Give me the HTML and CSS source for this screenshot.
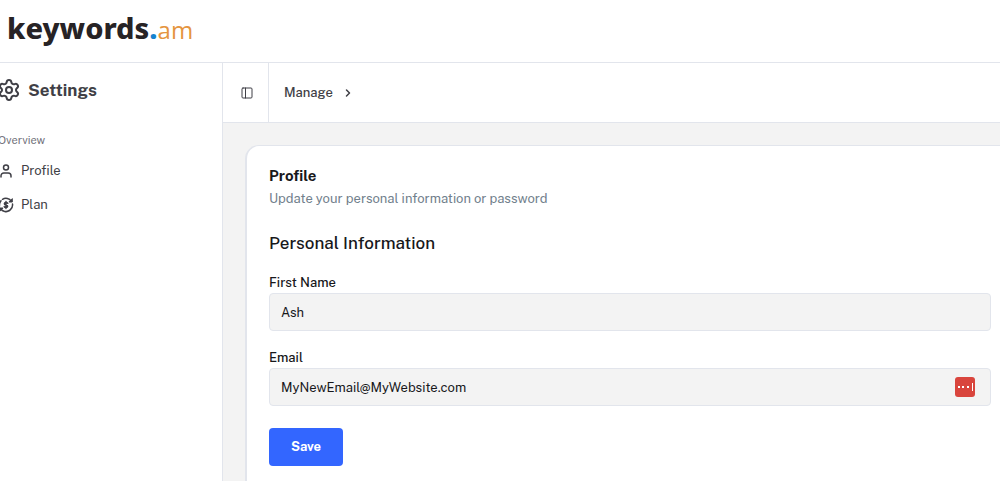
FILE: index.html
```html
<!DOCTYPE html>
<html lang="en">
<head>
  <meta charset="UTF-8" />
  <meta name="viewport" content="width=device-width, initial-scale=1.0">
  <title>Settings - keywords.am</title>
  <link rel="stylesheet" href="styles.css">
</head>
<body>
  <header class="site-header">
    <a class="logo" href="#">keywords<span class="logo-dot">.</span><span class="logo-tld">am</span></a>
  </header>

  <div class="layout">
    <aside class="sidebar">
      <h1 class="sidebar-title">
        <svg class="icon-gear" viewBox="0 0 24 24" aria-hidden="true">
          <path d="M9.671 4.136a2.34 2.34 0 0 1 4.659 0 2.34 2.34 0 0 0 3.319 1.915 2.34 2.34 0 0 1 2.33 4.033 2.34 2.34 0 0 0 0 3.831 2.34 2.34 0 0 1-2.33 4.033 2.34 2.34 0 0 0-3.319 1.915 2.34 2.34 0 0 1-4.659 0 2.34 2.34 0 0 0-3.32-1.915 2.34 2.34 0 0 1-2.33-4.033 2.34 2.34 0 0 0 0-3.831A2.34 2.34 0 0 1 6.35 6.051a2.34 2.34 0 0 0 3.319-1.915"/>
          <circle cx="12" cy="12" r="3"/>
        </svg>
        Settings
      </h1>
      <nav>
        <p class="nav-label">Overview</p>
        <a class="nav-link" href="#">
          <svg viewBox="0 0 16 16" aria-hidden="true">
            <circle cx="8" cy="4.5" r="2.5"/>
            <path d="M3 14v-1.2a2.8 2.8 0 0 1 2.8-2.8h4.4a2.8 2.8 0 0 1 2.8 2.8V14"/>
          </svg>
          Profile
        </a>
        <a class="nav-link" href="#">
          <svg viewBox="0 0 16 16" aria-hidden="true">
            <path d="M4.5 2.3A6.6 6.6 0 0 1 13.4 4.3M14.5 7a6.6 6.6 0 0 1-8.5 7.2M11.5 13.7A6.6 6.6 0 0 1 2.6 11.7M1.5 9A6.6 6.6 0 0 1 3 3.7"/>
            <path d="M14.3 2v3h-3zM1.7 14v-3h3z" fill="currentColor" stroke-width="1"/>
            <path d="M9.8 6.3C9.4 5.7 8.8 5.5 8 5.5c-2.2 0-2.2 2.3 0 2.5s2.2 2.5 0 2.5c-.8 0-1.5-.2-1.8-.8M8 4.6v6.8" stroke-width="1.5"/>
          </svg>
          Plan
        </a>
      </nav>
    </aside>

    <main class="content">
      <div class="topbar">
        <button class="toggle" type="button" aria-label="Toggle sidebar">
          <svg viewBox="0 0 12 12" aria-hidden="true">
            <rect x="1" y="1" width="10" height="10" rx="1"/>
            <path d="M4.5 1v10"/>
          </svg>
        </button>
        <nav class="breadcrumb">
          <a href="#">Manage</a>
          <svg viewBox="0 0 8 10" aria-hidden="true"><path d="M2.5 2l3 3-3 3"/></svg>
        </nav>
      </div>

      <section class="card">
        <h2 class="card-title">Profile</h2>
        <p class="card-text">Update your personal information or password</p>

        <form>
          <h3 class="form-title">Personal Information</h3>
          <div class="field">
            <label for="firstName">First Name</label>
            <input type="text" id="firstName" value="Ash">
          </div>
          <div class="field">
            <label for="email">Email</label>
            <div class="input-wrap">
              <input type="email" id="email" value="MyNewEmail@MyWebsite.com">
              <svg class="autofill" viewBox="0 0 20 20" aria-hidden="true">
                <rect width="20" height="20" rx="3" fill="#d9453d"/>
                <path d="M3 9h2v2H3zM7 9h2v2H7zM12 9h2v2h-2zM17 6h1v8h-1z" fill="#fff"/>
              </svg>
            </div>
          </div>
          <button class="save" type="button">Save</button>
        </form>
      </section>
    </main>
  </div>
</body>
</html>
```
FILE: styles.css
```css
* {
  box-sizing: border-box;
}
body {
  margin: 0;
  min-height: 100vh;
  display: flex;
  flex-direction: column;
  font-family: "Public Sans", Inter, "Liberation Sans", sans-serif;
  font-size: 13px;
  line-height: 20px;
  color: #18181b;
  background: #fff;
  overflow: hidden;
}
h1, h2, h3, p {
  margin: 0;
}
a {
  color: inherit;
  text-decoration: none;
}
svg {
  display: block;
  flex: none;
  fill: none;
  stroke: currentColor;
  stroke-linecap: round;
  stroke-linejoin: round;
}

/* header */
.site-header {
  padding: 8px 7px 12px;
  border-bottom: 1px solid #e2e5ec;
}
.logo {
  display: block;
  font-family: "Noto Sans", sans-serif;
  font-size: 29px;
  font-weight: 800;
  line-height: 40px;
  color: #272325;
}
.logo-dot {
  color: #1583cf;
}
.logo-tld {
  font-family: "Open Sans", sans-serif;
  font-size: 24px;
  font-weight: 400;
  color: #e5953f;
}

.layout {
  flex: 1;
  display: flex;
}

/* sidebar */
.sidebar {
  width: 223px;
  flex: none;
  border-right: 1px solid #e2e5ec;
  color: #3f3f46;
}
.sidebar-title {
  display: flex;
  align-items: center;
  gap: 7px;
  margin: 15px 0 30px -3px;
  font-size: 17px;
  font-weight: 700;
  line-height: 24px;
}
.icon-gear {
  width: 24px;
  height: 24px;
  stroke-width: 2;
}
.nav-label {
  margin: 0 0 6px -2px;
  font-size: 11px;
  line-height: 16px;
  color: #71717a;
}
.nav-link {
  display: flex;
  align-items: center;
  gap: 7px;
  height: 34px;
  margin-left: -2px;
}
.nav-link svg {
  width: 16px;
  height: 16px;
  stroke-width: 1.5;
}

/* content */
.content {
  flex: 1;
  min-width: 0;
  display: flex;
  flex-direction: column;
  background: #f3f3f3;
}
.topbar {
  display: flex;
  height: 60px;
  background: #fff;
  border-bottom: 1px solid #e2e5ec;
  color: #3f3f46;
}
.toggle {
  width: 46px;
  display: flex;
  align-items: center;
  justify-content: center;
  padding: 0 0 0 3px;
  border: 0;
  border-right: 1px solid #e2e5ec;
  background: none;
  color: inherit;
}
.toggle svg {
  width: 12px;
  height: 12px;
}
.breadcrumb {
  display: flex;
  align-items: center;
  gap: 11px;
  padding-left: 15px;
  font-weight: 500;
}
.breadcrumb svg {
  width: 8px;
  height: 10px;
  stroke-width: 1.5;
}

/* card runs past the right edge of the window */
.card {
  flex: 1;
  margin: 22px -15px 0 22px;
  padding: 19px 22px 0;
  background: #fff;
  border: 1px solid #e2e5ec;
  border-width: 1px 2px 0;
  border-radius: 14px 14px 0 0;
}
.card-title {
  font-size: 15px;
  font-weight: 700;
  line-height: 22px;
}
.card-text {
  line-height: 24px;
  color: #71808c;
}
.form-title {
  margin: 20px 0 17px;
  font-size: 17px;
  font-weight: 500;
  line-height: 24px;
}
.field {
  margin-bottom: 16px;
}
.field label {
  display: block;
  font-weight: 500;
  line-height: 21px;
}
.field input {
  display: block;
  width: 100%;
  height: 38px;
  padding: 0 11px;
  border: 1px solid #e2e5ec;
  border-radius: 4px;
  background: #f3f3f3;
  font: inherit;
  color: inherit;
}
.input-wrap {
  position: relative;
}
.autofill {
  position: absolute;
  top: 9px;
  right: 16px;
  width: 20px;
  height: 20px;
  stroke: none;
}
.save {
  height: 38px;
  margin-top: 6px;
  padding: 0 22px;
  border: 0;
  border-radius: 4px;
  background: #3366ff;
  color: #fff;
  font: inherit;
  font-weight: 700;
}
```
